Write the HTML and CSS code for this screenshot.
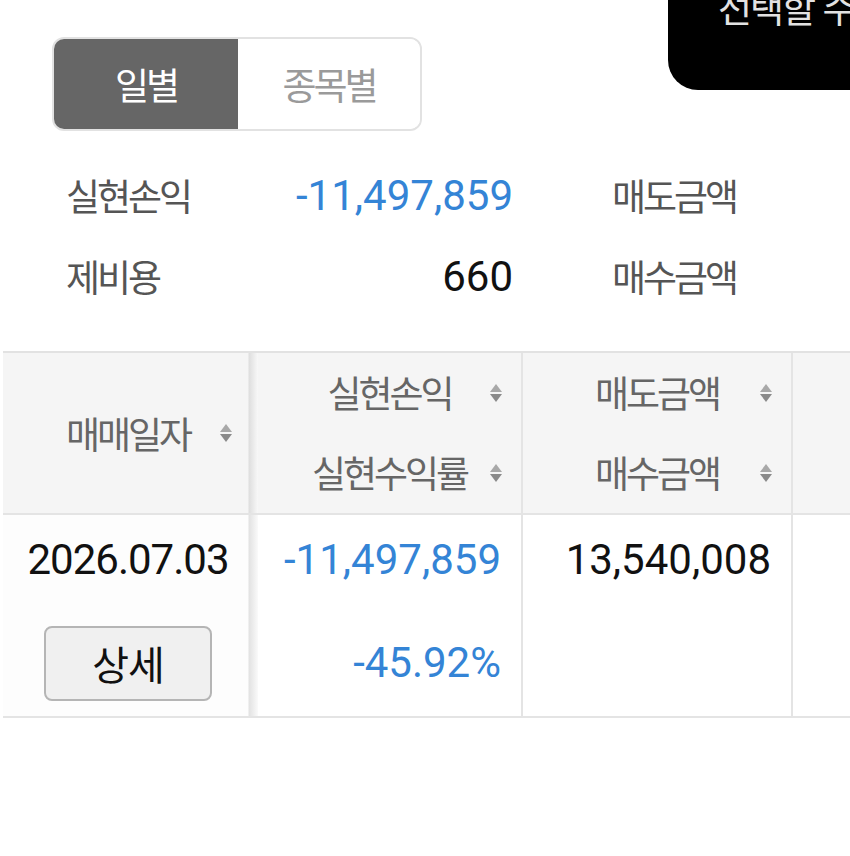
FILE: index.html
```html
<!DOCTYPE html>
<html lang="ko">
<head>
    <meta charset="UTF-8">
    <meta name="viewport" content="width=device-width, initial-scale=1.0">
    <title>매매내역</title>
    <link rel="stylesheet" href="styles.css">
</head>
<body>
    <div class="page">
        <div class="toast">선택할 수</div>

        <div class="tabs">
            <button class="tab active">일별</button>
            <button class="tab">종목별</button>
        </div>

        <div class="summary">
            <div class="label">실현손익</div>
            <div class="num minus">-11,497,859</div>
            <div class="label second">매도금액</div>

            <div class="label">제비용</div>
            <div class="num">660</div>
            <div class="label second">매수금액</div>
        </div>

        <div class="grid">
            <div class="th first">
                <div class="th-line tall"><span>매매일자</span><i class="sort"></i></div>
            </div>
            <div class="th">
                <div class="th-line top"><span>실현손익</span><i class="sort"></i></div>
                <div class="th-line bottom"><span>실현수익률</span><i class="sort"></i></div>
            </div>
            <div class="th">
                <div class="th-line top"><span>매도금액</span><i class="sort"></i></div>
                <div class="th-line bottom"><span>매수금액</span><i class="sort"></i></div>
            </div>
            <div class="th"></div>

            <div class="td first">
                <div class="td-line center num date">2026.07.03</div>
                <div class="td-line second center"><button class="detail-btn">상세</button></div>
            </div>
            <div class="td">
                <div class="td-line num minus">-11,497,859</div>
                <div class="td-line second num minus">-45.92%</div>
            </div>
            <div class="td">
                <div class="td-line num">13,540,008</div>
                <div class="td-line second"></div>
            </div>
            <div class="td"></div>
        </div>
    </div>
</body>
</html>
```

FILE: styles.css
```css
body {
    margin: 0;
    background: #fff;
    font-family: Roboto, "Noto Sans CJK KR", sans-serif;
}

.page {
    position: relative;
    width: 850px;
    height: 856px;
    overflow: hidden;
    padding-top: 37px;
    box-sizing: border-box;
}

/* toast at top right, cut off by the viewport */
.toast {
    position: absolute;
    top: 0;
    left: 668px;
    width: 240px;
    height: 103px;
    margin-top: -13px;
    background: #000;
    border-bottom-left-radius: 30px;
    color: #e2e2e2;
    font-family: "Noto Sans CJK KR", sans-serif;
    font-size: 37px;
    letter-spacing: -2px;
    line-height: 40px;
    padding-left: 50px;
    box-sizing: border-box;
}

.tabs {
    display: flex;
    width: 370px;
    height: 94px;
    margin-left: 52px;
    border: 2px solid #e2e2e2;
    border-radius: 12px;
    overflow: hidden;
    box-sizing: border-box;
}

.tab {
    border: none;
    background: #fff;
    color: #9a9a9a;
    font-family: "Noto Sans CJK KR", sans-serif;
    font-size: 37px;
    letter-spacing: -3px;
    padding: 0;
    margin: 0;
    flex: 1;
}

.tab.active {
    flex: 0 0 184px;
    background: #666;
    color: #fff;
}

.summary {
    display: grid;
    grid-template-columns: 180px 267px 238px;
    margin: 24px 0 0 66px;
}

.summary > div {
    height: 81px;
    line-height: 81px;
    white-space: nowrap;
}

.summary .second {
    padding-left: 99px;
}

.label {
    color: #555;
    font-family: "Noto Sans CJK KR", sans-serif;
    font-size: 37px;
    letter-spacing: -3px;
}

.num {
    font-family: Roboto, sans-serif;
    font-size: 42px;
    color: #111;
    text-align: right;
}

.minus {
    color: #3484d6;
}

.grid {
    display: grid;
    grid-template-columns: 255px 265px 270px 200px;
    margin: 34px 0 0 3px;
    border-top: 2px solid #e2e2e2;
}

.th, .td {
    position: relative;
    box-sizing: border-box;
    border-right: 2px solid #e4e4e4;
    border-bottom: 2px solid #e4e4e4;
}

.th {
    height: 162px;
    background: #f5f5f5;
}

.td {
    height: 203px;
    background: #fff;
    padding-bottom: 8px;
}

/* frozen first column with its shadow */
.th.first, .td.first {
    border-right: none;
    padding-right: 5px;
}

.th.first {
    background: linear-gradient(to left, #f8f8f8 0, #dedede 9px, transparent 10px) #f5f5f5;
}

.td.first {
    background: linear-gradient(to left, #fafafa 0, #e2e2e2 9px, transparent 10px) #fdfdfd;
}

.th-line {
    position: relative;
    text-align: center;
    color: #666;
    font-family: "Noto Sans CJK KR", sans-serif;
    font-size: 37px;
    letter-spacing: -3px;
    white-space: nowrap;
}

.th-line.top {
    height: 79px;
    line-height: 79px;
}

.th-line.bottom {
    height: 81px;
    line-height: 81px;
}

.th-line.tall {
    height: 160px;
    line-height: 160px;
}

.sort {
    position: absolute;
    right: 19px;
    top: 50%;
    width: 12px;
    height: 20px;
    margin-top: -10px;
}

.th.first .sort {
    right: 21px;
}

.sort::before,
.sort::after {
    content: "";
    position: absolute;
    left: 0;
    border-left: 6px solid transparent;
    border-right: 6px solid transparent;
}

.sort::before {
    top: 1px;
    border-bottom: 8px solid #a8a8a8;
}

.sort::after {
    bottom: 1px;
    border-top: 8px solid #8a8a8a;
}

.td-line {
    height: 90px;
    line-height: 90px;
    padding-right: 20px;
    white-space: nowrap;
}

.td-line.second {
    margin-top: 13px;
}

.td-line.center {
    text-align: center;
    padding-right: 0;
    display: flex;
    align-items: center;
    justify-content: center;
}

.date {
    letter-spacing: -1px;
}

.detail-btn {
    width: 168px;
    height: 75px;
    background: #f0f0f0;
    border: 2px solid #b5b5b5;
    border-radius: 8px;
    color: #111;
    font-family: "Noto Sans CJK KR", sans-serif;
    font-size: 40px;
    letter-spacing: -1px;
    padding: 0;
}
```
